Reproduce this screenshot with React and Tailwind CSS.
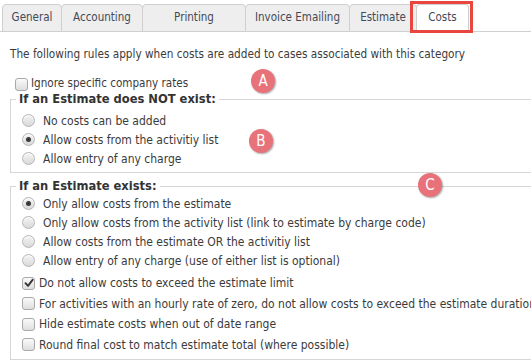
import React from 'react';

const tabs = [
    { name: 'General', w: 'w-[60px]' },
    { name: 'Accounting', w: 'w-[82px]' },
    { name: 'Printing', w: 'w-[104px]' },
    { name: 'Invoice Emailing', w: 'w-[105px]' },
    { name: 'Estimate', w: 'w-[68px]' },
];

const Radio = ({ checked }) => (
    <span className="w-[13px] h-[13px] rounded-full border border-[#b5b5b5] bg-gradient-to-b from-[#f4f4f4] to-[#d9d9d9] flex items-center justify-center shrink-0 shadow-[inset_0_1px_1px_rgba(255,255,255,0.8)]">
        {checked && <span className="w-[5px] h-[5px] rounded-full bg-[#3a3a3a]" />}
    </span>
);

const Checkbox = ({ checked }) => (
    <span className="w-[13px] h-[13px] rounded-[3px] border border-[#a9a9a9] bg-gradient-to-b from-[#fafafa] to-[#dedede] flex items-center justify-center shrink-0">
        {checked && (
            <svg width="10" height="10" viewBox="0 0 10 10">
                <path d="M1.5 5.2 L4 7.8 L8.6 1.8" fill="none" stroke="#333" strokeWidth="1.9" strokeLinecap="round" strokeLinejoin="round" />
            </svg>
        )}
    </span>
);

const Badge = ({ letter, className }) => (
    <div className={`absolute w-[24px] h-[24px] rounded-full bg-[#e8727a] text-white flex items-center justify-center text-[15px] shadow-[1px_1px_2px_rgba(0,0,0,0.35)] ${className}`}>
        {letter}
    </div>
);

const RadioRow = ({ label, checked }) => (
    <div className="flex items-center h-[19px] pl-[11px] gap-[8px] whitespace-nowrap">
        <Radio checked={checked} />
        <span>{label}</span>
    </div>
);

const CheckRow = ({ label, checked }) => (
    <div className="flex items-center h-[20.5px] pl-[11px] gap-[4px] whitespace-nowrap">
        <Checkbox checked={checked} />
        <span>{label}</span>
    </div>
);

export default function App() {
    return (
        <div className="relative w-[531px] h-[360px] overflow-hidden bg-white text-[#3b3b3b] text-[12px] font-['DejaVu_Sans_Condensed','DejaVu_Sans',sans-serif]">
            {/* tab strip */}
            <div className="flex items-end h-[32px] border-b border-[#cfcfcf] pl-[2px] text-[11.5px]">
                {tabs.map(t => (
                    <div
                        key={t.name}
                        className={`${t.w} h-[28px] -mb-px -mr-px flex items-center justify-center bg-[#eeeeee] border border-[#cfcfcf] rounded-t-[4px] text-[#444a55]`}
                    >
                        {t.name}
                    </div>
                ))}
                <div className="relative w-[53px] h-[28px] -mb-px flex items-center justify-center bg-white border border-[#cfcfcf] border-b-white rounded-t-[4px] text-[#444a55]">
                    Costs
                    <div className="absolute -left-[7px] -right-[5px] -top-[4px] -bottom-[2px] border-[3px] border-[#e8463f]" />
                </div>
            </div>

            <div className="pl-[10px]">
                <p className="mt-[15px] h-[14px] leading-[14px] text-[11.7px]">
                    The following rules apply when costs are added to cases associated with this category
                </p>

                <div className="mt-[16px] flex items-center h-[14px] pl-[5px] gap-[3px] text-[11.6px]">
                    <Checkbox />
                    <span>Ignore specific company rates</span>
                </div>

                <fieldset className="w-[560px] border border-[#d6d6d6] pb-[4px]">
                    <legend className="ml-[5px] px-[3px] font-bold text-[12.8px] text-[#333] leading-[16px]">If an Estimate does NOT exist:</legend>
                    <div className="pt-[4px]">
                        <RadioRow label="No costs can be added" />
                        <RadioRow label="Allow costs from the activitiy list" checked />
                        <RadioRow label="Allow entry of any charge" />
                    </div>
                </fieldset>

                <fieldset className="w-[560px] border border-[#d6d6d6] mt-[5px] pb-[4px]">
                    <legend className="ml-[5px] px-[3px] font-bold text-[12.8px] text-[#333] leading-[16px]">If an Estimate exists:</legend>
                    <div>
                        <RadioRow label="Only allow costs from the estimate" checked />
                        <RadioRow label="Only allow costs from the activity list (link to estimate by charge code)" />
                        <RadioRow label="Allow costs from the estimate OR the activitiy list" />
                        <RadioRow label="Allow entry of any charge (use of either list is optional)" />
                        <div className="h-[3px]" />
                        <CheckRow label="Do not allow costs to exceed the estimate limit" checked />
                        <CheckRow label="For activities with an hourly rate of zero, do not allow costs to exceed the estimate duration" />
                        <CheckRow label="Hide estimate costs when out of date range" />
                        <CheckRow label="Round final cost to match estimate total (where possible)" />
                    </div>
                </fieldset>

                <div className="flex gap-[35px] pl-[250px] mt-[1px]">
                    <div className="w-[83px] h-[20px] border border-[#d9d9d9] rounded-[3px] bg-[#f2f2f2]" />
                    <div className="w-[160px] h-[20px] border border-[#d9d9d9] rounded-[3px] bg-[#f2f2f2]" />
                </div>
            </div>

            <Badge letter="A" className="left-[251px] top-[69px]" />
            <Badge letter="B" className="left-[249px] top-[129px]" />
            <Badge letter="C" className="left-[418px] top-[173px]" />
        </div>
    );
}
